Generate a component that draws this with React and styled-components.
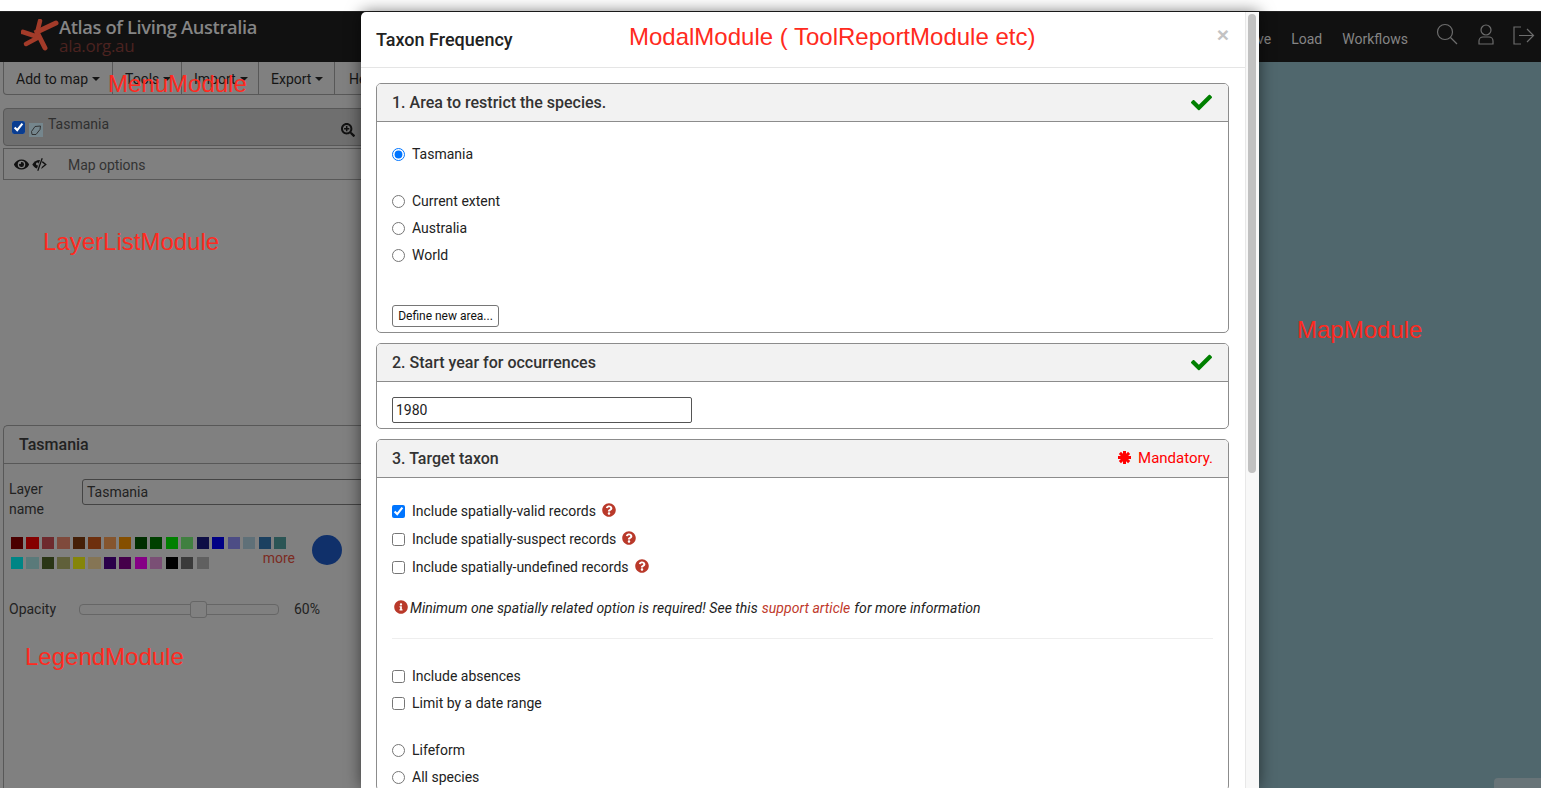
import React from "react";
import styled, { createGlobalStyle } from "styled-components";
import { FaCheck, FaQuestionCircle, FaInfoCircle, FaEye, FaSearchPlus } from "react-icons/fa";

const Global = createGlobalStyle`
  html, body { margin: 0; padding: 0; height: 100%; overflow: hidden; background: #fff; }
  body { font-family: Roboto, "Liberation Sans", sans-serif; }
  * { box-sizing: border-box; }
`;

const Page = styled.div`
  width: 1541px; height: 788px; padding-top: 11px; display: flex; flex-direction: column; overflow: hidden; position: relative;
`;
const Header = styled.header`
  height: 51px; flex: none; background: #111; display: flex; align-items: center; justify-content: space-between; border-top: 1px solid #222;
`;
const Brand = styled.div`display: flex; align-items: flex-start; padding-left: 21px; height: 100%;`;
const LogoMark = styled.svg`width: 38px; height: 34px; margin-top: 7px; flex: none; fill: none; stroke: #a33b29; stroke-linecap: round;`;
const BrandText = styled.div`display: flex; flex-direction: column; padding-top: 4px;`;
const BrandName = styled.span`font: 600 18.3px/22px "Open Sans", sans-serif; color: #858585; letter-spacing: -0.35px; white-space: nowrap;`;
const BrandUrl = styled.span`font: 400 17px/15px "Open Sans", sans-serif; color: #4c2320; letter-spacing: -0.3px;`;
const Nav = styled.nav`display: flex; align-items: center; padding-right: 6px;`;
const NavLink = styled.span`font-size: 14px; color: #858585; margin: 3px 20px 0 0;`;
const NavIcon = styled.svg`width: 24px; height: 24px; margin-left: ${p => p.$gap}px; fill: none; stroke: #6d6d6d; stroke-width: 1.2; display: block; margin-top: -4px;`;

const Main = styled.div`flex: 1; display: flex; min-height: 0;`;
const Left = styled.aside`width: 420px; flex: none; background: #808080; padding-left: 3px; display: flex; flex-direction: column;`;
const Menu = styled.div`height: 33px; flex: none; display: flex; border: 1px solid #585858; border-top: none; border-radius: 0 0 0 4px;`;
const MenuItem = styled.div`
  display: flex; align-items: center; gap: 4px; width: ${p => p.$w}px; padding: 2px 0 0 ${p => p.$pad}px; font-size: 14px; color: #151515; border-right: 1px solid #585858; flex: none;
`;
const Caret = styled.i`width: 0; height: 0; border: 4px solid transparent; border-top-color: #151515; border-bottom: none;`;
const LayerRow = styled.div`
  margin-top: 13px; height: 38px; flex: none; background: #6f6f6f; border: 1px solid #585858; border-radius: 4px 0 0 4px; display: flex; align-items: flex-start; padding: 12px 0 0 8px; font-size: 14px; color: #2f2f2f;
`;
const DarkCheck = styled.input`margin: 0; width: 13px; height: 13px; accent-color: #0a3d91; flex: none;`;
const LayerSwatch = styled.span`width: 14px; height: 14px; margin: 2px 5px 0 4px; background: #75868d; flex: none; display: flex;`;
const LayerName = styled.span`margin-top: -5px; width: 293px; flex: none;`;
const ZoomBtn = styled.span`display: flex; margin-top: 2px; color: #111; font-size: 14px;`;
const OptionRow = styled.div`
  margin-top: 2px; height: 32px; flex: none; border: 1px solid #585858; border-right: none; display: flex; align-items: center; padding: 1px 0 0 10px; gap: 3px; font-size: 14px; color: #333;
`;
const EyeIcon = styled.span`display: flex; font-size: 15px; color: #111;`;
const OptionLabel = styled.span`margin-left: 18px; letter-spacing: -0.05px;`;
const Legend = styled.section`
  margin-top: 245px; flex: 1; border: 1px solid #585858; border-bottom: none; border-right: none; border-radius: 5px 0 0 0; display: flex; flex-direction: column;
`;
const LegendHead = styled.div`height: 38px; flex: none; border-bottom: 1px solid #585858; padding-left: 15px; display: flex; align-items: center; font-size: 16px; font-weight: 500; color: #222;`;
const LegendBody = styled.div`padding: 15px 0 0 5px; display: flex; flex-direction: column; font-size: 14px; color: #222;`;
const NameRow = styled.div`display: flex; align-items: flex-start;`;
const NameLabel = styled.label`width: 60px; margin-right: 13px; line-height: 20px; flex: none;`;
const NameInput = styled.div`width: 340px; height: 26px; flex: none; border: 1px solid #444; border-radius: 3px 0 0 3px; display: flex; align-items: center; padding-left: 4px; font-size: 14px; color: #222;`;
const ColorRow = styled.div`display: flex; margin-top: 17px; padding-left: 2px; height: 34px; align-items: center;`;
const SwatchWrap = styled.div`width: 301px; display: flex; flex-direction: column; gap: 8px; position: relative;`;
const SwatchLine = styled.div`display: flex; gap: 3.4px;`;
const Swatch = styled.span`width: 12.1px; height: 12px; flex: none; background: ${p => p.$c};`;
const More = styled.span`position: absolute; right: 17px; bottom: 3px; font-size: 14px; color: #7c2b22;`;
const ColorDot = styled.span`width: 30px; height: 30px; border-radius: 50%; background: #10306a; flex: none; margin-top: -6px;`;
const OpacityRow = styled.div`display: flex; align-items: center; margin-top: 31px;`;
const OpacityLabel = styled.span`width: 70px; flex: none;`;
const Slider = styled.div`width: 200px; height: 11px; border: 1px solid #666; border-radius: 4px; position: relative; flex: none;`;
const Thumb = styled.span`position: absolute; left: 110px; top: -4px; width: 17px; height: 17px; background: #808080; border: 1px solid #666; border-radius: 3px;`;
const OpacityValue = styled.span`margin-left: 15px;`;

const MapArea = styled.main`flex: 1; background: #50676d; position: relative;`;
const MapTab = styled.div`position: absolute; right: 0; bottom: 0; width: 47px; height: 10px; background: #687478; border-radius: 4px 0 0 0;`;

const Modal = styled.div`
  position: absolute; left: 361px; top: 12px; width: 898px; height: 776px; background: #fff; border-radius: 5px 0 0 0; box-shadow: 0 0 16px rgba(0,0,0,.55); display: flex; overflow: hidden;
`;
const ModalContent = styled.div`width: 884px; flex: none; overflow: hidden;`;
const ModalHead = styled.div`height: 56px; border-bottom: 1px solid #e5e5e5; display: flex; align-items: center; justify-content: space-between; padding: 0 16px 0 15px;`;
const ModalTitle = styled.h4`margin: 0; font-size: 18px; font-weight: 500; color: #222;`;
const Close = styled.span`font: 700 21px/1 "Liberation Sans", sans-serif; color: #c3c3c3; margin-top: -11px;`;
const ModalBody = styled.div`padding: 15px 16px 0 15px;`;
const Scrollbar = styled.div`flex: 1; background: #f8f8f8; border-left: 1px solid #e8e8e8; padding: 2px 3px 0 2px;`;
const ScrollThumb = styled.div`height: 459px; background: #c1c1c1; border-radius: 5px;`;

const Card = styled.section`border: 1px solid #8c8c8c; border-radius: 5px; margin-bottom: 10px;`;
const CardHead = styled.div`
  height: 38px; background: #f2f2f2; border-bottom: 1px solid #8c8c8c; border-radius: 4px 4px 0 0; display: flex; align-items: center; justify-content: space-between; padding: 0 15px; font-size: 16px; font-weight: 500; color: #333;
`;
const CardBody = styled.div`padding: ${p => p.$pad || "0 15px"};`;
const GreenCheck = styled.span`display: flex; color: #008000; font-size: 21px; margin: -1px 1px 0 0;`;
const Mandatory = styled.span`display: flex; align-items: center; gap: 7px; color: #f00; font-size: 15px; font-weight: 400; margin-top: -2px;`;
const Asterisk = styled.svg`width: 13px; height: 13px; stroke: #f00; stroke-width: 3; margin-top: -1px;`;

const Tick = styled.input`margin: 0 7px 0 0; width: 13px; height: 13px; flex: none;`;
const Row = styled.label`
  display: flex; align-items: center; height: ${p => p.$h || 27}px; margin-top: ${p => p.$mt || 0}px; font-size: 14px; color: #222;
  ${Tick} { margin-top: ${p => (p.$h ? 0 : 2)}px; }
`;
const Help = styled.span`display: flex; color: #b9392a; font-size: 14px; margin: -3px 0 0 6px;`;
const DefineBtn = styled.button`
  display: block; margin-top: 37px; margin-bottom: 5px; height: 22px; width: 107px; padding: 0; background: #fff; border: 1px solid #767676; border-radius: 3px; font: 12px Roboto, sans-serif; color: #111;
`;
const YearInput = styled.div`width: 300px; height: 26px; border: 1px solid #555; border-radius: 2px; display: flex; align-items: center; padding-left: 3px; font-size: 14px; color: #222;`;
const Notice = styled.p`margin: 17px 0 0; height: 20px; display: flex; align-items: center; font-size: 14px; font-style: italic; color: #222; white-space: nowrap; padding-left: 2px; letter-spacing: 0.04px;`;
const NoticeIcon = styled.span`display: flex; color: #b9392a; font-size: 14px; margin: -3px 2px 0 0;`;
const SupportLink = styled.a`color: #c0392b; margin: 0 4px;`;
const Rule = styled.hr`margin: 20px 0 23px; border: none; border-top: 1px solid #eee;`;

const Annotation = styled.span`
  position: absolute; left: ${p => p.$x}px; top: ${p => p.$y}px; font: 400 24px/1 "Liberation Sans", sans-serif; color: #ff2a20; white-space: nowrap;
`;

const row1 = ["#4a0000","#850000","#6e2a2e","#7f4a3c","#452008","#6e300e","#85552e","#854f00","#002e00","#004000","#008000","#408040","#0e0e45","#000085","#4d4d85","#5f7078","#1b4060","#2b5555"];
const row2 = ["#008585","#5a7a7a","#2a3515","#60603a","#85850a","#857555","#2a004a","#45004a","#850085","#7a4f75","#000000","#3a3a3a","#606060"];

const Logo = () => (
  <LogoMark viewBox="0 0 38 34">
    <path d="M35 4 L16 13 L24 29" strokeWidth="5" />
    <path d="M19 2 L16 14" strokeWidth="4.5" />
    <path d="M2 13 L17 18" strokeWidth="5" />
    <path d="M5 25 L18 18" strokeWidth="4.5" />
  </LogoMark>
);

const HalfEye = () => (
  <svg width="15" height="15" viewBox="0 0 15 15" fill="#111">
    <path d="M8 3 C4.5 3 1.8 5 0.3 7.5 C1.3 9.3 3 11 5 11.6 L8 3 Z" />
    <path d="M9.6 1 L10.8 1.5 L6.4 14 L5.2 13.5 Z" />
    <path d="M10.6 4 L14.8 7.5 L9.3 12 L9.8 10 L12.7 7.5 L10 5.4 Z" />
    <circle cx="5.4" cy="7" r="1.4" fill="#808080" />
  </svg>
);

export default function App() {
  return (
    <Page>
      <Global />
      <Header>
        <Brand>
          <Logo />
          <BrandText>
            <BrandName>Atlas of Living Australia</BrandName>
            <BrandUrl>ala.org.au</BrandUrl>
          </BrandText>
        </Brand>
        <Nav>
          <NavLink>Save</NavLink>
          <NavLink>Load</NavLink>
          <NavLink>Workflows</NavLink>
          <NavIcon $gap={7} viewBox="0 0 24 24"><circle cx="10" cy="9" r="7.5" /><path d="M15.5 14.5 L22 21" /></NavIcon>
          <NavIcon $gap={15} viewBox="0 0 24 24"><circle cx="12" cy="7" r="5" /><path d="M5 21 v-3 a4 4 0 0 1 4 -4 h6 a4 4 0 0 1 4 4 v3 z" /></NavIcon>
          <NavIcon $gap={13} viewBox="0 0 24 24"><path d="M10 4 H3 V21 H10 M8 12.5 H22 M16 6 L22.5 12.5 L16 19" /></NavIcon>
        </Nav>
      </Header>
      <Main>
        <Left>
          <Menu>
            <MenuItem $w={109} $pad={12}>Add to map <Caret /></MenuItem>
            <MenuItem $w={69} $pad={12}>Tools <Caret /></MenuItem>
            <MenuItem $w={77} $pad={12}>Import <Caret /></MenuItem>
            <MenuItem $w={76} $pad={12}>Export <Caret /></MenuItem>
            <MenuItem $w={76} $pad={14}>Help <Caret /></MenuItem>
          </Menu>
          <LayerRow>
            <DarkCheck type="checkbox" defaultChecked />
            <LayerSwatch>
              <svg width="14" height="14" viewBox="0 0 14 14" fill="none" stroke="#2a2a2a" strokeWidth="0.9"><path d="M3 11.5 L2.5 8.5 L6 3.5 L11.5 3 L11 6.5 L7 11.5 Z" strokeLinejoin="round" /></svg>
            </LayerSwatch>
            <LayerName>Tasmania</LayerName>
            <ZoomBtn><FaSearchPlus /></ZoomBtn>
          </LayerRow>
          <OptionRow>
            <EyeIcon><FaEye /></EyeIcon>
            <EyeIcon><HalfEye /></EyeIcon>
            <OptionLabel>Map options</OptionLabel>
          </OptionRow>
          <Legend>
            <LegendHead>Tasmania</LegendHead>
            <LegendBody>
              <NameRow>
                <NameLabel>Layer name</NameLabel>
                <NameInput>Tasmania</NameInput>
              </NameRow>
              <ColorRow>
                <SwatchWrap>
                  <SwatchLine>{row1.map(c => <Swatch key={c} $c={c} />)}</SwatchLine>
                  <SwatchLine>{row2.map(c => <Swatch key={c} $c={c} />)}</SwatchLine>
                  <More>more</More>
                </SwatchWrap>
                <ColorDot />
              </ColorRow>
              <OpacityRow>
                <OpacityLabel>Opacity</OpacityLabel>
                <Slider><Thumb /></Slider>
                <OpacityValue>60%</OpacityValue>
              </OpacityRow>
            </LegendBody>
          </Legend>
        </Left>
        <MapArea><MapTab /></MapArea>
      </Main>

      <Modal>
        <ModalContent>
          <ModalHead>
            <ModalTitle>Taxon Frequency</ModalTitle>
            <Close>×</Close>
          </ModalHead>
          <ModalBody>
            <Card>
              <CardHead>1. Area to restrict the species.<GreenCheck><FaCheck /></GreenCheck></CardHead>
              <CardBody $pad="18px 15px 0">
                <Row><Tick type="radio" name="area" defaultChecked />Tasmania</Row>
                <Row $mt={20}><Tick type="radio" name="area" />Current extent</Row>
                <Row><Tick type="radio" name="area" />Australia</Row>
                <Row><Tick type="radio" name="area" />World</Row>
                <DefineBtn>Define new area...</DefineBtn>
              </CardBody>
            </Card>
            <Card>
              <CardHead>2. Start year for occurrences<GreenCheck><FaCheck /></GreenCheck></CardHead>
              <CardBody $pad="15px 15px 5px">
                <YearInput>1980</YearInput>
              </CardBody>
            </Card>
            <Card>
              <CardHead>
                3. Target taxon
                <Mandatory>
                  <Asterisk viewBox="0 0 13 13"><path d="M6.5 0 V13 M0 6.5 H13 M1.9 1.9 L11.1 11.1 M11.1 1.9 L1.9 11.1" /></Asterisk>
                  Mandatory.
                </Mandatory>
              </CardHead>
              <CardBody $pad="19px 15px 0">
                <Row $h={28}><Tick type="checkbox" defaultChecked />Include spatially-valid records<Help><FaQuestionCircle /></Help></Row>
                <Row $h={28}><Tick type="checkbox" />Include spatially-suspect records<Help><FaQuestionCircle /></Help></Row>
                <Row $h={28}><Tick type="checkbox" />Include spatially-undefined records<Help><FaQuestionCircle /></Help></Row>
                <Notice>
                  <NoticeIcon><FaInfoCircle /></NoticeIcon>
                  Minimum one spatially related option is required! See this<SupportLink>support article</SupportLink>for more information
                </Notice>
                <Rule />
                <Row><Tick type="checkbox" />Include absences</Row>
                <Row><Tick type="checkbox" />Limit by a date range</Row>
                <Row $mt={20}><Tick type="radio" name="taxon" />Lifeform</Row>
                <Row><Tick type="radio" name="taxon" />All species</Row>
              </CardBody>
            </Card>
          </ModalBody>
        </ModalContent>
        <Scrollbar><ScrollThumb /></Scrollbar>
      </Modal>

      <Annotation $x={108} $y={72}>MenuModule</Annotation>
      <Annotation $x={43} $y={230}>LayerListModule</Annotation>
      <Annotation $x={25} $y={645}>LegendModule</Annotation>
      <Annotation $x={1297} $y={318}>MapModule</Annotation>
      <Annotation $x={629} $y={25}>ModalModule ( ToolReportModule etc)</Annotation>
    </Page>
  );
}
